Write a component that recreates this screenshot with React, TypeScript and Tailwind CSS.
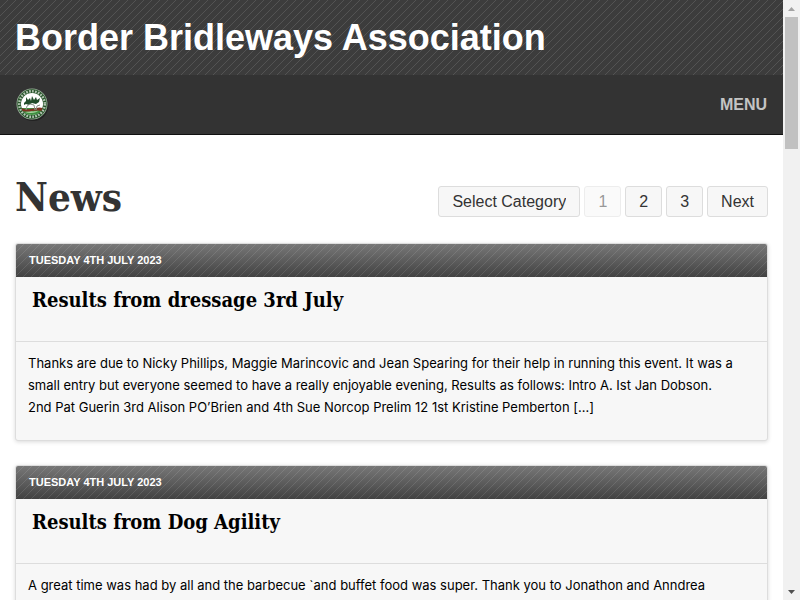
import { ChangeEvent, useState } from "react";

type Post = {
  id: number;
  date: string;
  title: string;
  excerpt: string;
};

const POSTS: Post[] = [
  {
    id: 1,
    date: "Tuesday 4th July 2023",
    title: "Results from dressage 3rd July",
    excerpt:
      "Thanks are due to Nicky Phillips, Maggie Marincovic and Jean Spearing for their help in running this event. It was a small entry but everyone seemed to have a really enjoyable evening, Results as follows: Intro A. Ist Jan Dobson. 2nd Pat Guerin 3rd Alison PO’Brien and 4th Sue Norcop Prelim 12 1st Kristine Pemberton […]",
  },
  {
    id: 2,
    date: "Tuesday 4th July 2023",
    title: "Results from Dog Agility",
    excerpt: "A great time was had by all and the barbecue `and buffet food was super. Thank you to Jonathon and Anndrea",
  },
];

const PAGER = "rounded-[3px] border border-[#dddddd] bg-[#f7f7f7] px-[13px] text-base leading-[29px] text-[#333333]";

export default function App() {
  return (
    <div className="flex h-screen overflow-hidden bg-white font-['Liberation_Sans',Arial,sans-serif]">
      <div className="min-w-0 flex-1 overflow-hidden">
        <header>
          <div className="bg-[#3c3c3c] bg-[linear-gradient(135deg,transparent_46%,#535353_46%,#535353_54%,transparent_54%)] bg-size-[8px_8px] px-[15px] pt-[15px] pb-[15px]">
            <h1 className="text-4xl leading-[45px] font-bold text-white">Border Bridleways Association</h1>
          </div>
          <nav className="flex h-[60px] items-center justify-between border-b border-[#111111] bg-[#333333] px-4">
            <a href="#home" aria-label="Home">
              <Crest />
            </a>
            <button type="button" className="text-base font-bold text-[#c4c4c4] uppercase">
              Menu
            </button>
          </nav>
        </header>

        <main className="px-[15px] pt-9">
          <div className="mb-5 flex h-[52px] items-center justify-between">
            <h2 className="font-['DejaVu_Serif_Condensed','DejaVu_Serif',serif] text-[40px] leading-[52px] font-bold text-[#333333]">News</h2>
            <Pagination />
          </div>
          <div className="flex flex-col gap-6">
            {POSTS.map((p) => (
              <PostCard key={p.id} post={p} />
            ))}
          </div>
        </main>
      </div>
      <ScrollRail />
    </div>
  );
}

function Pagination() {
  const [category, setCategory] = useState("");
  return (
    <div className="mt-[9px] flex gap-1">
      <select
        aria-label="Select Category"
        value={category}
        onChange={(e: ChangeEvent<HTMLSelectElement>) => setCategory(e.target.value)}
        className={`${PAGER} appearance-none`}
      >
        <option value="">Select Category</option>
      </select>
      <button type="button" disabled className={`${PAGER} opacity-50`}>
        1
      </button>
      <a href="#page-2" className={PAGER}>
        2
      </a>
      <a href="#page-3" className={PAGER}>
        3
      </a>
      <a href="#page-2" className={PAGER}>
        Next
      </a>
    </div>
  );
}

function PostCard({ post }: { post: Post }) {
  return (
    <article className="overflow-hidden rounded-[3px] border border-[#dddddd] bg-[#f7f7f7] shadow-[0_1px_4px_rgba(0,0,0,0.15)]">
      {/* date strip: stripes over a vertical fade */}
      <div className="bg-[linear-gradient(135deg,transparent_46%,rgba(255,255,255,0.1)_46%,rgba(255,255,255,0.1)_54%,transparent_54%),linear-gradient(#777777,#424242)] bg-size-[8px_8px,100%_100%] px-[13px] text-[11px] leading-[33px] font-bold text-white uppercase">
        {post.date}
      </div>
      <div className="h-[65px] border-b border-[#dddddd] px-4 pt-2">
        <h3 className="font-['DejaVu_Serif_Condensed','DejaVu_Serif',serif] text-xl leading-[30px] font-bold text-black">
          <a href={`#post-${post.id}`}>{post.title}</a>
        </h3>
      </div>
      <p className="pt-[10px] pr-8 pb-[22px] pl-3 font-['Inter',sans-serif] text-[13px] leading-[22px] text-black">{post.excerpt}</p>
    </article>
  );
}

function Crest() {
  return (
    <svg width="33" height="34" viewBox="0 0 33 34" aria-hidden>
      <circle cx="17" cy="17.500" r="15.500" fill="#222222" />
      <circle cx="16" cy="16" r="15.500" fill="#9fb49f" />
      <circle cx="16" cy="16" r="14.700" fill="#28552b" />
      <circle cx="16" cy="16" r="12.800" fill="none" stroke="#b5c6b5" strokeWidth="2.400" strokeDasharray="1.700 1.300" />
      <circle cx="16" cy="16" r="11" fill="#ffffff" />
      <path d="M5.500 20h21c-1 4-5 7-10.500 7S6.500 24 5.500 20z" fill="#3f9140" />
      <path d="M9 24c4-2 9 1 14-2-2 3-9 4-14 2z" fill="#a8d3a0" />
      <path d="M5.500 20c4 2 6 1 9 1l9-1.500 3 .5-1 3c-6-2-13 2-19 0z" fill="#7b3221" />
      <path d="M8 15l2-2V9l2 3 2-2 1 3 1-5 2 4 2-3 1 3 3-2-1 4-3 2-4-1-3 2-3-1-2 1z" fill="#214c2a" />
      <path d="M10 22l1-4 3-2 4 1 1 5M20 22l1-4 3-1" fill="none" stroke="#8a958b" />
    </svg>
  );
}

function ScrollRail() {
  return (
    <div className="flex w-[17px] shrink-0 flex-col items-center bg-[#f1f1f1]" aria-hidden>
      <svg width="17" height="17">
        <path d="M5 11h7L8.500 7z" fill="#a3a3a3" />
      </svg>
      <div className="h-[132px] w-[13px] bg-[#c1c1c1]" />
      <svg width="17" height="17" className="mt-auto">
        <path d="M5 7h7l-3.500 4z" fill="#505050" />
      </svg>
    </div>
  );
}
